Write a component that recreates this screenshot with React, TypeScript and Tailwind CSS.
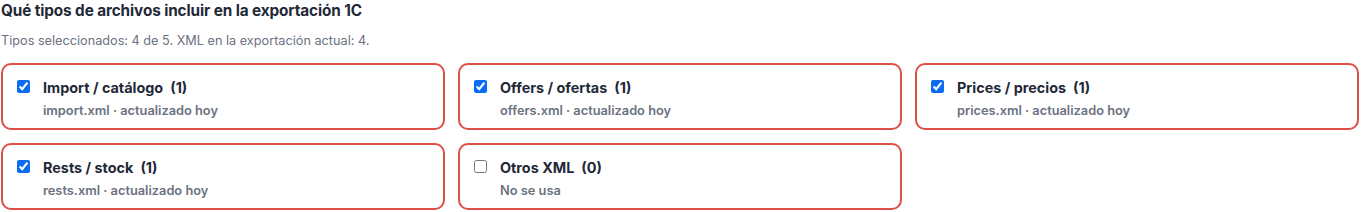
import { useState } from "react"

interface FileType {
    id: string
    name: string
    count: number
    hint: string
}

const fileTypes: FileType[] = [
    { id: 'import', name: 'Import / catálogo', count: 1, hint: 'import.xml · actualizado hoy' },
    { id: 'offers', name: 'Offers / ofertas', count: 1, hint: 'offers.xml · actualizado hoy' },
    { id: 'prices', name: 'Prices / precios', count: 1, hint: 'prices.xml · actualizado hoy' },
    { id: 'rests', name: 'Rests / stock', count: 1, hint: 'rests.xml · actualizado hoy' },
    { id: 'other', name: 'Otros XML', count: 0, hint: 'No se usa' },
]

export default function App() {
    const [selected, setSelected] = useState<string[]>(['import', 'offers', 'prices', 'rests'])

    const toggle = (id: string) => {
        setSelected(prev => prev.includes(id) ? prev.filter(x => x !== id) : [...prev, id])
    }

    return (
        <div className="bg-white px-[1px] pt-[1px] font-['Inter',sans-serif] text-[#1f2937]">
            <h3 className="text-[15.3px] font-bold leading-[20px] tracking-[-0.1px]">Qué tipos de archivos incluir en la exportación 1C</h3>
            <p className="mt-[11px] text-[12.7px] leading-[18px] text-[#6b7280]">
                Tipos seleccionados: {selected.length} de {fileTypes.length}. XML en la exportación actual: 4.
            </p>
            <div className="mt-[13px] grid grid-cols-3 gap-[13px] pr-[2px]">
                {fileTypes.map(t => (
                    <label
                        key={t.id}
                        className="box-border flex h-[67px] cursor-pointer gap-[13px] rounded-[10px] border-2 border-[#dc5046] bg-white px-[14px] pt-[14px]"
                    >
                        <input
                            type="checkbox"
                            checked={selected.includes(t.id)}
                            onChange={() => toggle(t.id)}
                            className="mt-[1px] h-[13px] w-[13px] accent-[#0b6cf2]"
                        />
                        <div className="flex flex-col">
                            <span className="text-[14.4px] font-bold leading-[18px]">
                                {t.name}<span className="ml-[7px]">({t.count})</span>
                            </span>
                            <span className="mt-[6px] text-[12.8px] font-semibold leading-[16px] text-[#6b7280]">{t.hint}</span>
                        </div>
                    </label>
                ))}
            </div>
        </div>
    )
}
